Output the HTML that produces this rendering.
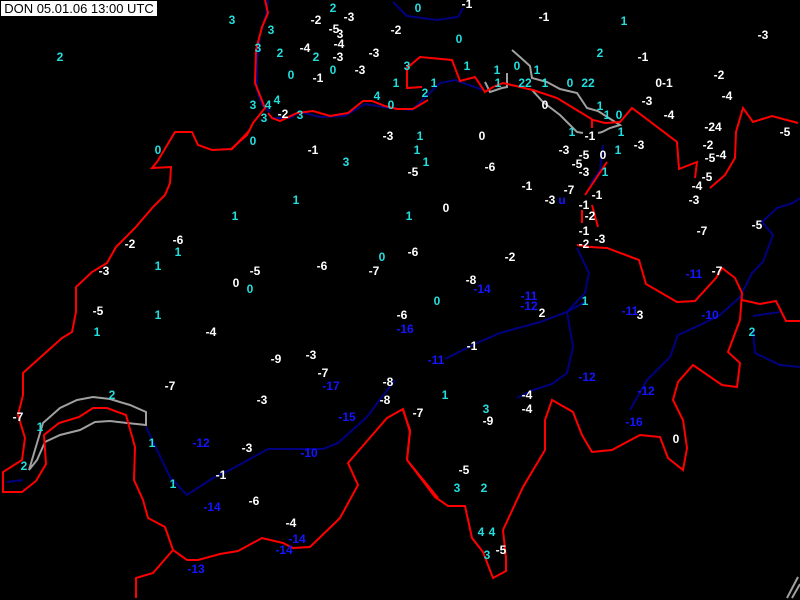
<!DOCTYPE html>
<html><head><meta charset="utf-8"><style>
html,body{margin:0;padding:0;background:#000;width:800px;height:600px;overflow:hidden}
svg{display:block}
text{font-family:"Liberation Sans",sans-serif;font-size:12px;font-weight:bold;text-anchor:middle}
.w{fill:#fff}.c{fill:#22dede}.b{fill:#1515ff}
.r{fill:none;stroke:#f00;stroke-width:2}
.n{fill:none;stroke:#000080;stroke-width:2}
.g{fill:none;stroke:#a0a0a0;stroke-width:2}
</style></head><body>
<svg width="800" height="600" viewBox="0 0 800 600">
<rect width="800" height="600" fill="#000"/>
<!-- navy contours -->
<polyline class="n" points="393,2 407,16 437,20 458,17 463,8"/>
<polyline class="n" points="268,0 266,15 260,35 257,60 257,90 262,105 270,112"/>
<polyline class="n" points="272,118 290,118 300,112 320,117 345,116 365,104 390,108 412,110 440,83 455,80 483,90"/>
<polyline class="n" points="577,248 589,273 585,293 567,312 573,347 567,373 552,384 533,390 517,398"/>
<polyline class="n" points="445,359 477,343 500,333 540,322 567,312 585,302"/>
<polyline class="n" points="800,198 793,203 777,208 762,222 773,235 763,262 752,273 740,297 720,315 700,325 678,335 670,357 647,380 630,410"/>
<polyline class="n" points="753,316 780,312"/>
<polyline class="n" points="753,330 755,353 780,365 800,367"/>
<polyline class="n" points="603,145 600,170 590,185"/>
<polyline class="n" points="146,427 170,477 187,495 213,478 230,470 268,449 300,449 323,449 338,443 367,417 378,402 395,380"/>
<polyline class="n" points="7,482 23,480"/>
<!-- gray lakes -->
<polyline class="g" points="29,470 43,423 60,408 77,400 93,397 110,399 130,405 146,412 146,425 127,423 110,421 95,422 80,430 60,435 45,442 37,460 29,470"/>
<polyline class="g" points="512,50 520,57 530,66 532,78 547,82 560,89 577,93 587,108 598,111 612,120 620,125 610,128 602,132 598,133"/>
<polyline class="g" points="532,90 543,102 560,115 568,123 577,132 583,133"/>
<polyline class="g" points="507,73 507,87 502,88 490,92 485,82"/>
<polyline class="g" points="787,598 798,577"/><polyline class="g" points="792,598 800,584"/>
<!-- red borders -->
<polyline class="r" points="265,0 268,13 262,27 256,50 255,83 263,103 265,108 253,123 247,135 230,150"/>
<polyline class="r" points="268,113 272,118 280,121 297,113 313,111 330,116 348,113 363,101 372,101 385,106 397,109 413,109 428,100"/>
<polyline class="r" points="422,87 407,88 407,68 420,57 452,60 460,81 475,77 485,92 493,87 503,83 520,87 533,90 557,98 580,112 593,120 605,123 620,122 632,108 652,123 677,142 679,169 697,162 695,178"/>
<polyline class="r" points="710,188 725,175 735,158 736,132 743,108 753,122 772,116 798,123"/>
<polyline class="r" points="592,120 592,128"/><polyline class="r" points="585,195 597,177 607,162"/>
<polyline class="r" points="582,210 582,223"/><polyline class="r" points="592,205 598,227"/>
<polyline class="r" points="250,130 232,149 212,150 198,145 192,132 175,132 157,162 152,168 171,167 170,183 165,195 153,207 135,228 125,238 116,247 107,263 92,272 76,287 76,312 72,332 62,338 43,355 23,373 23,395 18,415 25,438 22,460 3,472 3,492 22,492 36,481 46,464 44,435 59,423 79,417 93,408 107,408 126,415 135,447 134,480 143,500 148,518 165,527 173,550 187,560 198,560 220,554 238,551 262,538 283,543 293,548 310,547 340,518 358,485 348,463 387,418 403,409 410,432 407,460 438,498"/>
<polyline class="r" points="173,550 153,573 136,578 136,598"/>
<polyline class="r" points="403,410 410,430 407,460 435,497 448,506 465,506 472,538 483,552 493,578 506,571 506,558 503,530 523,487 545,450 545,420 552,400 573,412 582,435 592,452 612,450 640,435 660,437 668,458 683,470 687,448 683,420 673,400 678,382 693,365 722,385 737,387 740,363 728,352 740,320 742,293 735,278 722,268 716,278 695,301 677,302 646,284 639,260 607,248 590,247 577,245"/>
<polyline class="r" points="742,300 760,304 776,301 786,321 800,321"/>
<!-- header -->
<rect x="1" y="1" width="156" height="15" fill="#fff"/>
<text x="79" y="13" style="fill:#000;font-size:13px;font-weight:normal">DON 05.01.06 13:00 UTC</text>
<!-- labels -->
<g>
<text class="c" x="333" y="12">2</text><text class="c" x="418" y="12">0</text><text class="w" x="467" y="8">-1</text>
<text class="c" x="232" y="24">3</text><text class="c" x="271" y="34">3</text><text class="w" x="316" y="24">-2</text><text class="w" x="349" y="21">-3</text>
<text class="w" x="334" y="33">-5</text><text class="w" x="340" y="38">3</text><text class="w" x="339" y="48">-4</text><text class="w" x="396" y="34">-2</text>
<text class="w" x="544" y="21">-1</text><text class="c" x="624" y="25">1</text><text class="w" x="763" y="39">-3</text><text class="c" x="459" y="43">0</text>
<text class="c" x="60" y="61">2</text><text class="c" x="258" y="52">3</text><text class="c" x="280" y="57">2</text><text class="w" x="305" y="52">-4</text>
<text class="w" x="338" y="61">-3</text><text class="w" x="374" y="57">-3</text><text class="c" x="316" y="61">2</text><text class="c" x="600" y="57">2</text><text class="w" x="643" y="61">-1</text>
<text class="c" x="291" y="79">0</text><text class="w" x="318" y="82">-1</text><text class="c" x="333" y="74">0</text><text class="w" x="360" y="74">-3</text>
<text class="c" x="407" y="70">3</text><text class="c" x="396" y="87">1</text><text class="c" x="434" y="87">1</text><text class="c" x="467" y="70">1</text>
<text class="c" x="497" y="74">1</text><text class="c" x="498" y="87">1</text><text class="c" x="517" y="70">0</text><text class="c" x="537" y="74">1</text>
<text class="c" x="525" y="87">22</text><text class="c" x="545" y="87">1</text><text class="c" x="570" y="87">0</text><text class="c" x="588" y="87">22</text>
<text class="w" x="664" y="87">0-1</text><text class="w" x="719" y="79">-2</text><text class="w" x="727" y="100">-4</text>
<text class="c" x="253" y="109">3</text><text class="c" x="268" y="109">4</text><text class="c" x="277" y="104">4</text><text class="w" x="283" y="118">-2</text>
<text class="c" x="300" y="119">3</text><text class="c" x="264" y="122">3</text><text class="c" x="377" y="100">4</text><text class="c" x="391" y="109">0</text><text class="c" x="425" y="97">2</text>
<text class="w" x="545" y="109">0</text><text class="c" x="600" y="110">1</text><text class="c" x="607" y="119">1</text><text class="c" x="619" y="119">0</text>
<text class="w" x="647" y="105">-3</text><text class="w" x="669" y="119">-4</text>
<text class="c" x="158" y="154">0</text><text class="c" x="253" y="145">0</text><text class="w" x="313" y="154">-1</text><text class="c" x="346" y="166">3</text>
<text class="w" x="388" y="140">-3</text><text class="c" x="420" y="140">1</text><text class="c" x="417" y="154">1</text><text class="c" x="426" y="166">1</text><text class="w" x="413" y="176">-5</text>
<text class="w" x="482" y="140">0</text><text class="w" x="490" y="171">-6</text><text class="c" x="572" y="136">1</text><text class="w" x="590" y="140">-1</text><text class="c" x="621" y="136">1</text>
<text class="w" x="564" y="154">-3</text><text class="w" x="584" y="159">-5</text><text class="w" x="603" y="159">0</text><text class="c" x="618" y="154">1</text>
<text class="w" x="577" y="168">-5</text><text class="w" x="584" y="176">-3</text><text class="c" x="605" y="176">1</text><text class="w" x="639" y="149">-3</text>
<text class="w" x="713" y="131">-24</text><text class="w" x="708" y="149">-2</text><text class="w" x="721" y="159">-4</text><text class="w" x="710" y="162">-5</text>
<text class="w" x="707" y="181">-5</text><text class="w" x="697" y="190">-4</text><text class="w" x="694" y="204">-3</text><text class="w" x="785" y="136">-5</text>
<text class="c" x="296" y="204">1</text><text class="w" x="527" y="190">-1</text><text class="w" x="550" y="204">-3</text><text class="b" x="562" y="204">u</text>
<text class="w" x="569" y="194">-7</text><text class="w" x="597" y="199">-1</text><text class="w" x="584" y="209">-1</text><text class="w" x="590" y="220">-2</text>
<text class="w" x="584" y="235">-1</text><text class="w" x="600" y="243">-3</text><text class="w" x="584" y="248">-2</text>
<text class="c" x="235" y="220">1</text><text class="c" x="409" y="220">1</text><text class="w" x="446" y="212">0</text>
<text class="w" x="130" y="248">-2</text><text class="w" x="178" y="244">-6</text><text class="c" x="178" y="256">1</text><text class="c" x="158" y="270">1</text>
<text class="w" x="104" y="275">-3</text><text class="w" x="255" y="275">-5</text><text class="w" x="322" y="270">-6</text><text class="w" x="374" y="275">-7</text>
<text class="c" x="382" y="261">0</text><text class="w" x="413" y="256">-6</text><text class="w" x="510" y="261">-2</text><text class="w" x="702" y="235">-7</text><text class="w" x="757" y="229">-5</text>
<text class="w" x="236" y="287">0</text><text class="c" x="250" y="293">0</text><text class="w" x="471" y="284">-8</text><text class="b" x="482" y="293">-14</text>
<text class="b" x="529" y="300">-11</text><text class="b" x="529" y="310">-12</text><text class="w" x="542" y="317">2</text><text class="c" x="585" y="305">1</text>
<text class="c" x="437" y="305">0</text><text class="w" x="402" y="319">-6</text><text class="b" x="405" y="333">-16</text>
<text class="w" x="98" y="315">-5</text><text class="c" x="158" y="319">1</text><text class="c" x="97" y="336">1</text><text class="w" x="211" y="336">-4</text>
<text class="b" x="630" y="315">-11</text><text class="w" x="640" y="319">3</text><text class="b" x="694" y="278">-11</text><text class="w" x="717" y="275">-7</text>
<text class="b" x="710" y="319">-10</text><text class="c" x="752" y="336">2</text>
<text class="w" x="276" y="363">-9</text><text class="w" x="311" y="359">-3</text><text class="w" x="323" y="377">-7</text><text class="b" x="331" y="390">-17</text>
<text class="b" x="436" y="364">-11</text><text class="w" x="472" y="350">-1</text><text class="b" x="587" y="381">-12</text>
<text class="w" x="170" y="390">-7</text><text class="w" x="388" y="386">-8</text><text class="w" x="385" y="404">-8</text><text class="c" x="445" y="399">1</text>
<text class="c" x="112" y="399">2</text><text class="w" x="262" y="404">-3</text><text class="w" x="18" y="421">-7</text><text class="c" x="40" y="431">1</text>
<text class="b" x="347" y="421">-15</text><text class="w" x="418" y="417">-7</text><text class="c" x="486" y="413">3</text><text class="w" x="488" y="425">-9</text>
<text class="w" x="527" y="399">-4</text><text class="w" x="527" y="413">-4</text><text class="b" x="646" y="395">-12</text><text class="b" x="634" y="426">-16</text><text class="w" x="676" y="443">0</text>
<text class="c" x="152" y="447">1</text><text class="b" x="201" y="447">-12</text><text class="w" x="247" y="452">-3</text><text class="b" x="309" y="457">-10</text>
<text class="c" x="24" y="470">2</text><text class="c" x="173" y="488">1</text><text class="w" x="221" y="479">-1</text><text class="w" x="464" y="474">-5</text>
<text class="c" x="457" y="492">3</text><text class="c" x="484" y="492">2</text><text class="w" x="254" y="505">-6</text><text class="b" x="212" y="511">-14</text>
<text class="w" x="291" y="527">-4</text><text class="b" x="297" y="543">-14</text><text class="b" x="284" y="554">-14</text>
<text class="c" x="481" y="536">4</text><text class="c" x="492" y="536">4</text><text class="c" x="487" y="559">3</text><text class="w" x="501" y="554">-5</text>
<text class="b" x="196" y="573">-13</text>
</g>
</svg>
</body></html>
